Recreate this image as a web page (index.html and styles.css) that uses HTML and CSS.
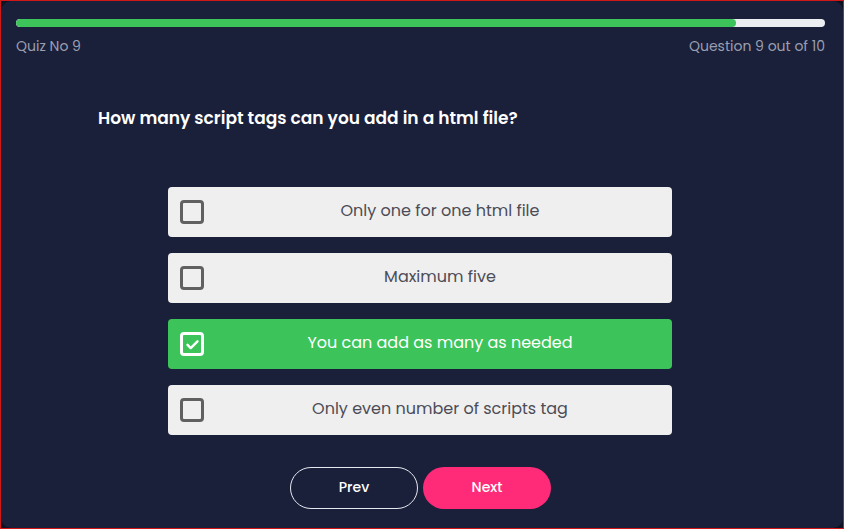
FILE: index.html
```html
<!DOCTYPE html>
<html lang="en">
<head>
<meta charset="utf-8">
<title>Quiz</title>
<link rel="stylesheet" href="styles.css">
</head>
<body>
<div class="frame">
  <main class="card">
    <div class="progress"><div class="progress-fill" style="width: 89%"></div></div>
    <div class="meta">
      <span class="quiz-no">Quiz No 9</span>
      <span class="q-count">Question 9 out of 10</span>
    </div>
    <h1 class="question">How many script tags can you add in a html file?</h1>
    <ul class="options">
      <li class="option"><span class="box"></span><span class="label">Only one for one html file</span></li>
      <li class="option"><span class="box"></span><span class="label">Maximum five</span></li>
      <li class="option selected"><span class="box"><svg viewBox="0 0 24 24" width="17" height="17"><path d="M5 12.5l4.5 4.5L19 7.5" fill="none" stroke="#fff" stroke-width="3.4" stroke-linecap="round" stroke-linejoin="round"/></svg></span><span class="label">You can add as many as needed</span></li>
      <li class="option"><span class="box"></span><span class="label">Only even number of scripts tag</span></li>
    </ul>
    <div class="nav">
      <button class="btn prev">Prev</button>
      <button class="btn next">Next</button>
    </div>
  </main>
</div>
</body>
</html>
```
FILE: styles.css
```css
* { box-sizing: border-box; }
html, body { margin: 0; padding: 0; height: 100%; }
body {
  background: #0e1222;
  font-family: "Poppins", "Open Sans", "Noto Sans", sans-serif;
}
.frame {
  height: 529px;
  border: 1px solid #d01818;
  background: #0e1222;
}
.card {
  height: 100%;
  background: #1a203a;
  border-radius: 10px;
  padding: 18px 18px 0 15px;
  display: flex;
  flex-direction: column;
}
.progress {
  height: 8px;
  background: #eceef2;
  border-radius: 4px;
  overflow: hidden;
}
.progress-fill {
  height: 100%;
  background: #3cc45a;
  border-radius: 4px;
}
.meta {
  display: flex;
  justify-content: space-between;
  margin-top: 9px;
  font-size: 14px;
  color: #9a9fb0;
  line-height: 20px;
}
.question {
  margin: 50px 0 0 82px;
  font-size: 17px;
  font-weight: 600;
  color: #ffffff;
  line-height: 24px;
}
.options {
  list-style: none;
  margin: 57px 0 0 152px;
  padding: 0;
  width: 504px;
  display: flex;
  flex-direction: column;
  gap: 16px;
}
.option {
  height: 50px;
  background: #efefef;
  border-radius: 4px;
  display: flex;
  align-items: center;
  padding: 0 12px;
  color: #4c4c57;
  font-size: 16px;
}
.option .box {
  width: 24px;
  height: 24px;
  border: 3px solid #606060;
  border-radius: 4px;
  flex: none;
  display: flex;
  align-items: center;
  justify-content: center;
}
.option .label {
  flex: 1;
  text-align: center;
  padding-left: 16px;
  padding-bottom: 4px;
}
.option.selected {
  background: #3cc45a;
  color: #ffffff;
}
.option.selected .box {
  border-color: #ffffff;
}
.nav {
  display: flex;
  justify-content: center;
  gap: 5px;
  margin-top: 32px;
}
.btn {
  width: 128px;
  height: 42px;
  border-radius: 21px;
  font-family: "Poppins", "Open Sans", sans-serif;
  font-size: 14px;
  font-weight: 500;
  color: #ffffff;
  cursor: pointer;
  padding: 0 0 2px;
}
.prev {
  background: transparent;
  border: 1px solid #e6e8f0;
}
.next {
  background: #ff2a78;
  border: none;
}
```
